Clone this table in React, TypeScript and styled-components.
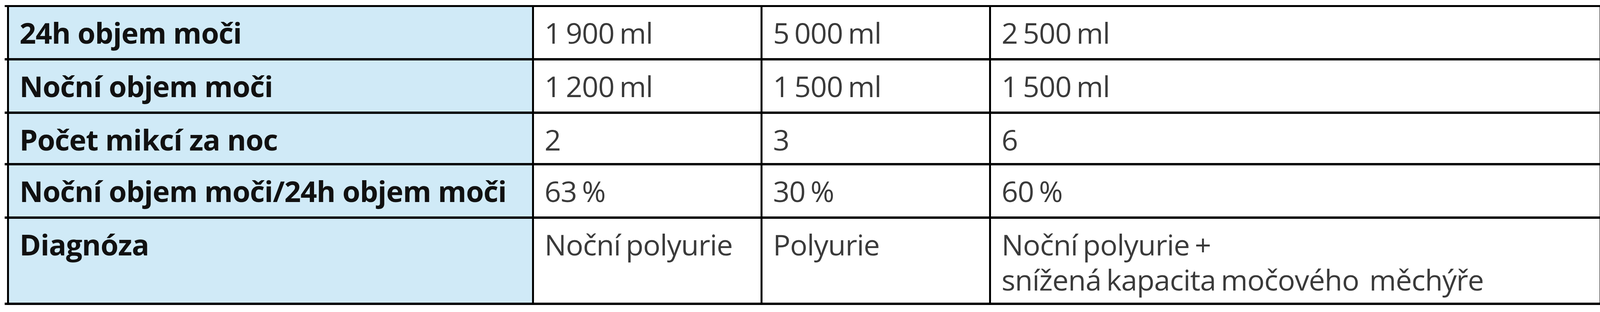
import React from "react";
import styled, { createGlobalStyle } from "styled-components";

const GlobalStyle = createGlobalStyle`
  html,
  body {
    margin: 0;
    padding: 0;
    background: #fff;
  }

  body {
    font-family: "Open Sans", "Noto Sans", "DejaVu Sans", sans-serif;
  }
`;

const Table = styled.div`
  margin: 13px 0 0 12px;
  width: 4095px;
  border-top: 5px solid #000;
`;

const Row = styled.div<{ $height: number }>`
  display: grid;
  grid-template-columns: 1349px 585px 585px 1564px;
  height: ${(p) => p.$height}px;
  padding: 0 6px;
  border-bottom: 6px solid #000;
`;

const Cell = styled.div<{ $head?: boolean }>`
  box-sizing: border-box;
  padding: 21px 20px 0 27px;
  border-right: 5px solid #000;
  font-size: 74px;
  line-height: 90px;
  letter-spacing: -1px;
  word-spacing: ${(p) => (p.$head ? "0" : "-5px")};
  white-space: nowrap;
  font-weight: ${(p) => (p.$head ? 700 : 400)};
  color: ${(p) => (p.$head ? "#111" : "#3a3a3a")};
  background: ${(p) => (p.$head ? "#d0eaf7" : "#fff")};

  &:first-child {
    border-left: 5px solid #000;
  }

  &:last-child {
    border-right-width: 6px;
  }
`;

const Line = styled.span`
  display: block;
  height: 90px;
`;

type RowData = {
  label: string;
  values: React.ReactNode[];
  height: number;
};

const rows: RowData[] = [
  { label: "24h objem moči", values: ["1 900 ml", "5 000 ml", "2 500 ml"], height: 131 },
  { label: "Noční objem moči", values: ["1 200 ml", "1 500 ml", "1 500 ml"], height: 131 },
  { label: "Počet mikcí za noc", values: ["2", "3", "6"], height: 126 },
  { label: "Noční objem moči/24h objem moči", values: ["63 %", "30 %", "60 %"], height: 131 },
  {
    label: "Diagnóza",
    values: [
      "Noční polyurie",
      "Polyurie",
      <>
        <Line>Noční polyurie +</Line>
        <Line>snížená kapacita močového{"\u00a0 "}měchýře</Line>
      </>,
    ],
    height: 215,
  },
];

function App() {
  return (
    <>
      <GlobalStyle />
      <Table>
        {rows.map((row) => (
          <Row key={row.label} $height={row.height}>
            <Cell $head>{row.label}</Cell>
            {row.values.map((v, i) => (
              <Cell key={i}>{v}</Cell>
            ))}
          </Row>
        ))}
      </Table>
    </>
  );
}

export default App;
